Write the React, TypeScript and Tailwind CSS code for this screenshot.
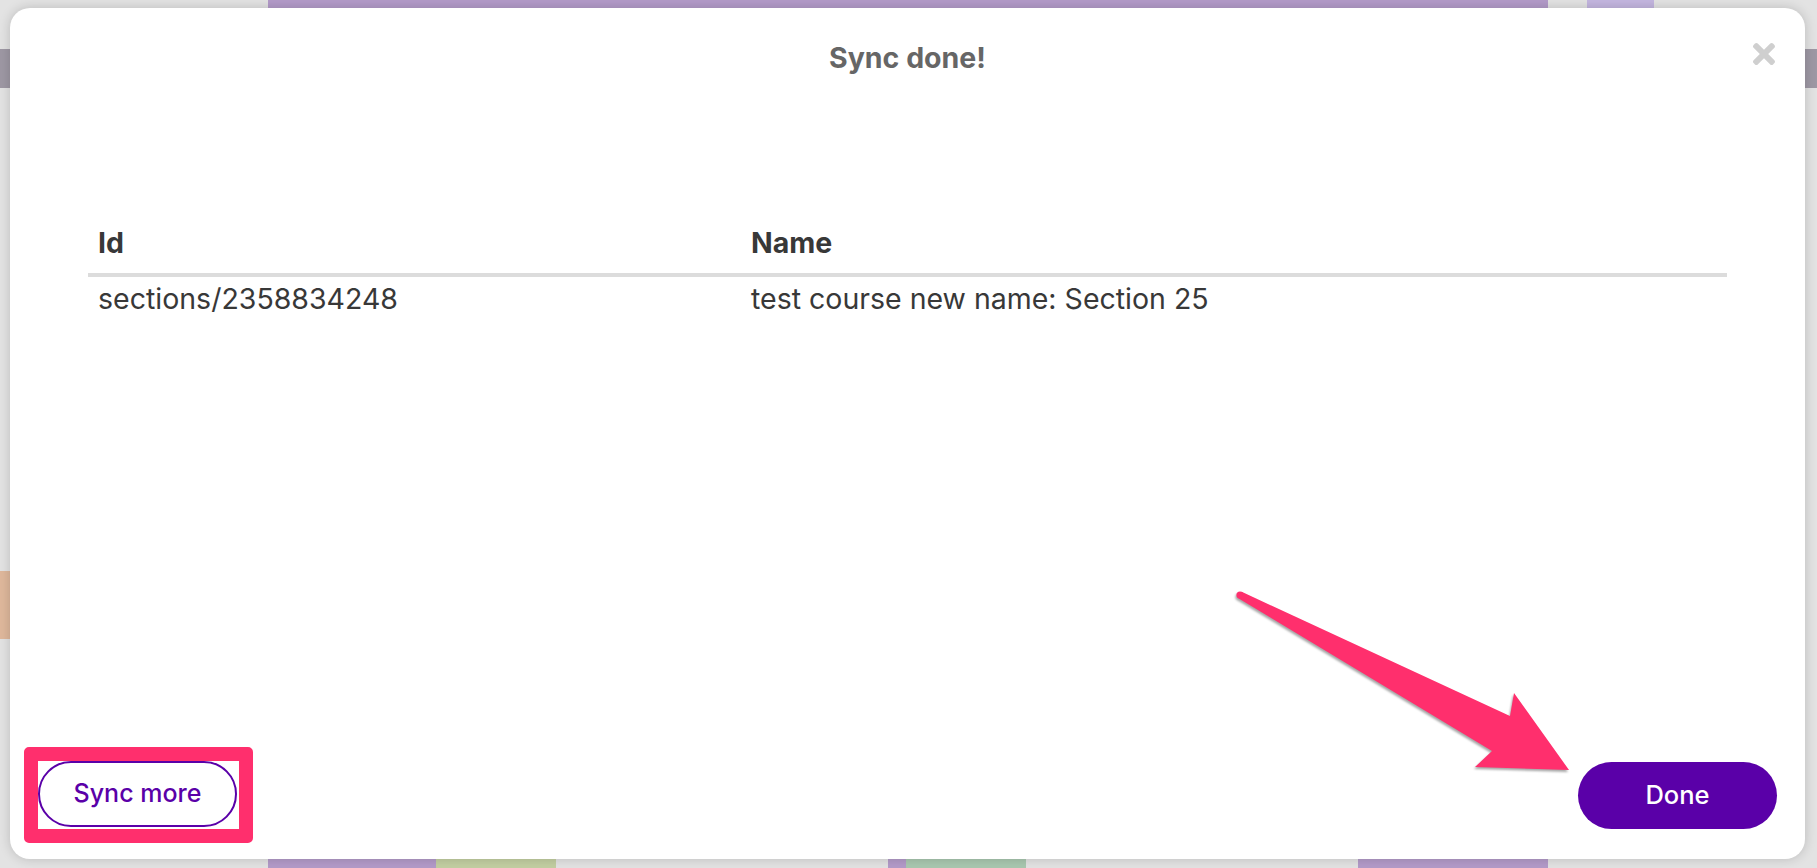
import { FaTimes } from "react-icons/fa";

function Backdrop() {
  // page behind the dialog, only slivers of it are visible
  return (
    <div className="flex h-full flex-col">
      <div className="flex h-[8px]">
        <div className="w-[268px]" />
        <div className="w-[1280px] bg-[#b39bc9]" />
        <div className="w-[39px]" />
        <div className="w-[67px] bg-[#c4b6e0]" />
      </div>
      <div className="mt-[41px] h-[39px] bg-[#9e98a4]" />
      <div className="mt-[483px] h-[68px] w-[10px] bg-[#dfb89c]" />
      <div className="mt-auto flex h-[9px]">
        <div className="w-[268px]" />
        <div className="w-[168px] bg-[#b39bc9]" />
        <div className="w-[120px] bg-[#c3cfa2]" />
        <div className="w-[332px]" />
        <div className="w-[18px] bg-[#b39bc9]" />
        <div className="w-[120px] bg-[#a9c8b0]" />
        <div className="w-[332px]" />
        <div className="w-[190px] bg-[#b39bc9]" />
      </div>
    </div>
  );
}

function Arrow() {
  return (
    <svg
      width="350"
      height="195"
      viewBox="0 0 350 195"
      className="absolute left-[1230px] top-[585px] drop-shadow-[-1px_2px_1px_rgba(0,0,0,0.35)]"
    >
      <circle cx="10" cy="10" r="3.6" fill="#ff2f6d" />
      <polygon
        points="11.7,6.8 280,131 284,108 339,185 245,182 262,166 8.3,13.2"
        fill="#ff2f6d"
      />
    </svg>
  );
}

export default function App() {
  return (
    <div className="relative h-[868px] w-full overflow-hidden bg-[#e3e3e3] font-['Inter',sans-serif]">
      <Backdrop />

      <div className="absolute left-[10px] top-[8px] flex h-[851px] w-[1795px] flex-col rounded-[20px] bg-white shadow-[0_0_12px_rgba(0,0,0,0.18)]">
        <div className="relative pt-[33px] text-center">
          <h2 className="text-[28.5px] font-bold leading-[33px] text-[#666666]">Sync done!</h2>
          <button className="absolute right-[25px] top-[30px] text-[#cfcfcf]">
            <FaTimes size={32} />
          </button>
        </div>

        <div className="mx-[78px] mt-[145px] text-[28.5px] leading-[32px] text-[#383838]">
          <div className="grid grid-cols-[651px_1fr] border-b-4 border-[#dcdcdc] pt-[8px] pb-[14px] font-bold">
            <div className="px-[10px]">Id</div>
            <div className="px-[12px]">Name</div>
          </div>
          <div className="grid grid-cols-[651px_1fr] pt-[6px] pb-[8px]">
            <div className="px-[10px]">sections/2358834248</div>
            <div className="px-[12px]">test course new name: Section 25</div>
          </div>
        </div>

        <div className="mt-auto flex items-center justify-between pb-[16px] pl-[14px] pr-[28px]">
          <div className="rounded-[5px] border-[14px] border-[#ff2f6d] bg-white pr-[2px] pb-[2px]">
            <button className="h-[66px] w-[199px] rounded-full border-2 border-[#5a00a8] text-[25px] font-medium text-[#5a00a8]">
              Sync more
            </button>
          </div>
          <button className="h-[67px] w-[199px] rounded-full bg-[#5a00a8] text-[25.5px] font-medium text-white">
            Done
          </button>
        </div>
      </div>

      <Arrow />
    </div>
  );
}
